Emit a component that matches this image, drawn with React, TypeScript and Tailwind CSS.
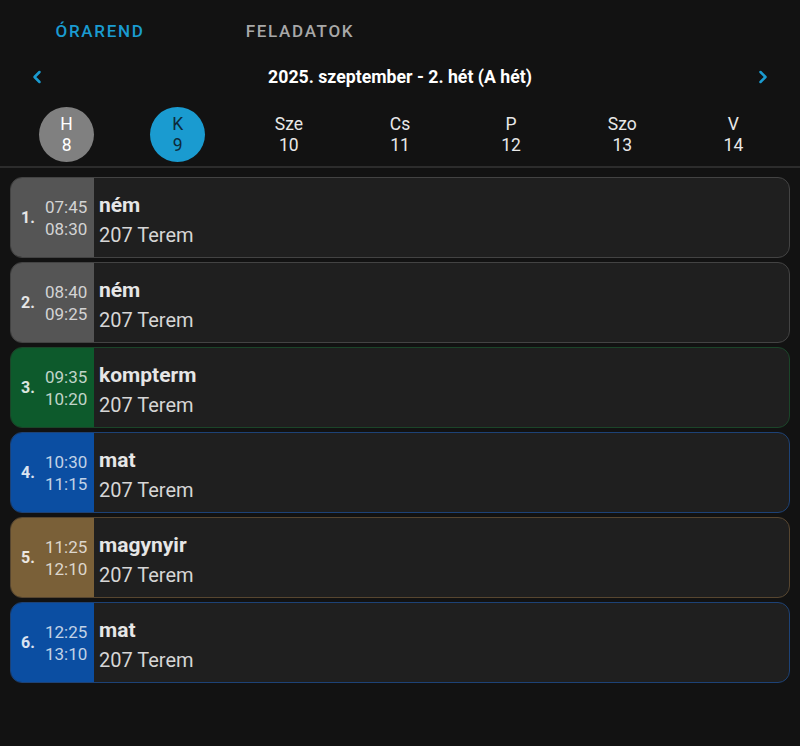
import { ChevronLeft, ChevronRight } from 'lucide-react'

type Lesson = {
    n: number
    start: string
    end: string
    subject: string
    room: string
    panel: string
    border: string
}

const lessons: Lesson[] = [
    { n: 1, start: '07:45', end: '08:30', subject: 'ném', room: '207 Terem', panel: 'bg-[#555555]', border: 'border-[#434343]' },
    { n: 2, start: '08:40', end: '09:25', subject: 'ném', room: '207 Terem', panel: 'bg-[#555555]', border: 'border-[#434343]' },
    { n: 3, start: '09:35', end: '10:20', subject: 'kompterm', room: '207 Terem', panel: 'bg-[#0d5a2c]', border: 'border-[#1b4529]' },
    { n: 4, start: '10:30', end: '11:15', subject: 'mat', room: '207 Terem', panel: 'bg-[#0b4ea2]', border: 'border-[#1d4276]' },
    { n: 5, start: '11:25', end: '12:10', subject: 'magynyir', room: '207 Terem', panel: 'bg-[#7a6038]', border: 'border-[#574630]' },
    { n: 6, start: '12:25', end: '13:10', subject: 'mat', room: '207 Terem', panel: 'bg-[#0b4ea2]', border: 'border-[#1d4276]' },
]

const days = [
    { d: 'H', n: 8, circle: 'bg-[#808080]' },
    { d: 'K', n: 9, circle: 'bg-[#1a9bd0] text-[#0d2a3a]' },
    { d: 'Sze', n: 10, circle: '' },
    { d: 'Cs', n: 11, circle: '' },
    { d: 'P', n: 12, circle: '' },
    { d: 'Szo', n: 13, circle: '' },
    { d: 'V', n: 14, circle: '' },
]

function LessonCard({ l }: { l: Lesson }) {
    return (
        <div className={`flex h-[81px] rounded-[12px] border bg-[#1f1f1f] overflow-hidden ${l.border}`}>
            <div className={`w-[83px] shrink-0 flex items-center pl-[10px] ${l.panel}`}>
                <span className="w-[24px] text-[16px] font-bold text-white/85">{l.n}.</span>
                <div className="flex flex-col items-end text-[17px] leading-[22px] text-white/75">
                    <span>{l.start}</span>
                    <span>{l.end}</span>
                </div>
            </div>
            <div className="flex flex-col pl-[5px] pt-[14px]">
                <span className="text-[21px] font-bold leading-[27px] text-[#e6e6e6]">{l.subject}</span>
                <span className="text-[20px] leading-[32px] text-[#d6d6d6]">{l.room}</span>
            </div>
        </div>
    )
}

export default function App() {
    return (
        <div className="min-h-screen bg-[#121212] text-white" style={{ fontFamily: 'Roboto, "Noto Sans", sans-serif' }}>
            {/* Tabs */}
            <div className="flex h-[64px] items-center">
                <div className="w-[200px] text-center text-[17px] font-medium tracking-[0.1em] text-[#1a9bd0]">ÓRAREND</div>
                <div className="w-[200px] text-center text-[17px] font-medium tracking-[0.1em] text-[#a8a8a8]">FELADATOK</div>
            </div>

            {/* Week nav */}
            <div className="flex h-[26px] items-center justify-between px-[27px]">
                <ChevronLeft size={20} strokeWidth={3} className="text-[#1a9bd0]" />
                <span className="text-[17.7px] font-bold text-white">2025. szeptember - 2. hét (A hét)</span>
                <ChevronRight size={20} strokeWidth={3} className="text-[#1a9bd0]" />
            </div>

            {/* Days */}
            <div className="grid grid-cols-7 px-[11px] pt-[17px] pb-[4px]">
                {days.map(d => (
                    <div key={d.d} className="flex justify-center">
                        <div className={`flex h-[55px] w-[55px] flex-col items-center justify-center rounded-full text-[17.5px] leading-[21px] ${d.circle || 'text-[#e8e8e8]'}`}>
                            <span>{d.d}</span>
                            <span>{d.n}</span>
                        </div>
                    </div>
                ))}
            </div>
            <div className="h-[2px] bg-[#2c2c2c]" />

            {/* Lessons */}
            <div className="flex flex-col gap-[4px] px-[10px] pt-[9px]">
                {lessons.map(l => (
                    <LessonCard key={l.n} l={l} />
                ))}
            </div>
        </div>
    )
}
